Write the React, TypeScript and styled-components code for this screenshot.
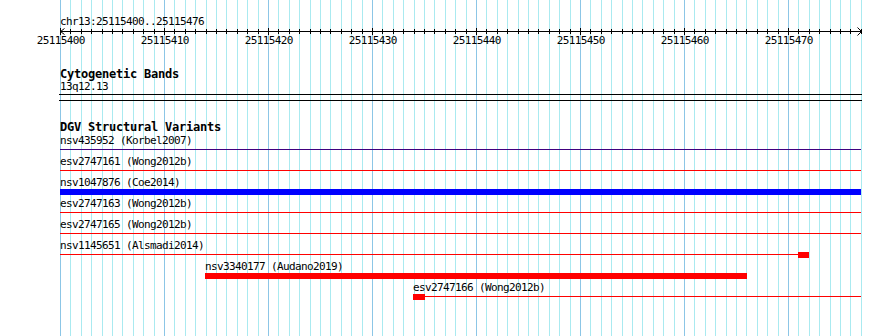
import React from "react";
import styled, { createGlobalStyle } from "styled-components";

const START = 25115400;
const SPAN = 77;
const LEFT = 60;
const SCALE = 10.4;
const WIDTH = 890;
const HEIGHT = 336;

// grid and ruler snap to the nearest pixel, features start on the pixel they fall in
const xOf = (offset: number) => Math.round(LEFT + offset * SCALE);
const featX = (offset: number) => Math.floor(LEFT + offset * SCALE);

type Segment = { from: number; to: number; thick?: boolean };
type Variant = { name: string; study: string; color: string; parts: Segment[] };

const variants: Variant[] = [
  { name: "nsv435952", study: "Korbel2007", color: "#40007f", parts: [{ from: 0, to: SPAN }] },
  { name: "esv2747161", study: "Wong2012b", color: "#ff0000", parts: [{ from: 0, to: SPAN }] },
  { name: "nsv1047876", study: "Coe2014", color: "#0000ff", parts: [{ from: 0, to: SPAN, thick: true }] },
  { name: "esv2747163", study: "Wong2012b", color: "#ff0000", parts: [{ from: 0, to: SPAN }] },
  { name: "esv2747165", study: "Wong2012b", color: "#ff0000", parts: [{ from: 0, to: SPAN }] },
  {
    name: "nsv1145651",
    study: "Alsmadi2014",
    color: "#ff0000",
    parts: [
      { from: 0, to: 71 },
      { from: 71, to: 72, thick: true },
    ],
  },
  { name: "nsv3340177", study: "Audano2019", color: "#ff0000", parts: [{ from: 14, to: 66, thick: true }] },
  {
    name: "esv2747166",
    study: "Wong2012b",
    color: "#ff0000",
    parts: [
      { from: 34, to: 35, thick: true },
      { from: 35, to: SPAN },
    ],
  },
];

const GlobalStyle = createGlobalStyle`
  html, body {
    margin: 0;
    padding: 0;
    background: #ffffff;
  }
`;

const Panel = styled.div`
  position: relative;
  width: ${WIDTH}px;
  height: ${HEIGHT}px;
  overflow: hidden;
  background: #ffffff;
  font-family: "DejaVu Sans Mono", "Liberation Mono", monospace;
  color: #000000;
`;

const GridLayer = styled.svg`
  position: absolute;
  left: 0;
  top: 0;
  z-index: 0;
`;

const Content = styled.div`
  position: relative;
  z-index: 1;
`;

const RulerSvg = styled.svg`
  display: block;
`;

const Track = styled.section<{ $gap: number }>`
  margin-top: ${(p) => p.$gap}px;
`;

const TrackTitle = styled.div`
  padding-left: ${LEFT}px;
  height: 12px;
  line-height: 12px;
  font-size: 12px;
  font-weight: bold;
  letter-spacing: -0.22px;
  white-space: pre;
`;

const BandLabel = styled.div`
  padding-left: ${LEFT}px;
  height: 13px;
  line-height: 13px;
  font-size: 11px;
  letter-spacing: -0.62px;
`;

const Band = styled.div`
  margin: 1px 0 0 ${LEFT - 1}px;
  width: ${xOf(SPAN) - LEFT + 2}px;
  height: 5px;
  border-top: 1px solid #000000;
  border-bottom: 1px solid #000000;
`;

const Rows = styled.div`
  margin-top: 2px;
`;

const Row = styled.div`
  height: 21px;
`;

const FeatureLabel = styled.div`
  height: 12px;
  line-height: 12px;
  font-size: 11px;
  letter-spacing: -0.62px;
  white-space: pre;
`;

const Lane = styled.div`
  position: relative;
  height: 9px;
`;

const Glyph = styled.div<{ $thick?: boolean; $color: string }>`
  position: absolute;
  top: ${(p) => (p.$thick ? 0 : 2)}px;
  height: ${(p) => (p.$thick ? 6 : 1)}px;
  background: ${(p) => p.$color};
`;

const Grid = () => {
  const lines = [];
  for (let i = 0; i <= SPAN; i++) {
    const x = xOf(i) + 0.5;
    lines.push(
      <line
        key={i}
        x1={x}
        x2={x}
        y1={0}
        y2={HEIGHT}
        stroke={i % 10 === 0 ? "#8cc6e6" : "#aaeaf0"}
        strokeWidth={1}
      />
    );
  }
  return (
    <GridLayer width={WIDTH} height={HEIGHT}>
      {lines}
    </GridLayer>
  );
};

const Ruler = () => {
  const y = 31.5;
  const right = xOf(SPAN) + 0.5;
  const ticks = [];
  const labels = [];
  for (let i = 0; i <= SPAN; i++) {
    const x = xOf(i) + 0.5;
    const major = i % 10 === 0;
    ticks.push(<line key={i} x1={x} x2={x} y1={major ? 28 : 29} y2={major ? 35 : 34} stroke="#000" />);
    if (major) {
      labels.push(
        <text key={i} x={x + 0.3} y={44} textAnchor="middle">
          {START + i}
        </text>
      );
    }
  }
  return (
    <RulerSvg width={WIDTH} height={52} fontFamily="DejaVu Sans Mono, Liberation Mono, monospace" fontSize={11} letterSpacing={-0.62}>
      <text x={LEFT} y={25}>
        chr13:{START}..{START + SPAN - 1}
      </text>
      <line x1={LEFT} x2={right} y1={y} y2={y} stroke="#000" />
      {ticks}
      <polyline points={`${LEFT + 4.5},${y - 3} ${LEFT + 0.5},${y} ${LEFT + 4.5},${y + 3}`} fill="none" stroke="#000" />
      <polyline points={`${right - 4},${y - 4} ${right},${y} ${right - 4},${y + 4}`} fill="none" stroke="#000" />
      {labels}
    </RulerSvg>
  );
};

const VariantRow = ({ v }: { v: Variant }) => {
  const start = Math.min(...v.parts.map((p) => p.from));
  return (
    <Row>
      <FeatureLabel style={{ paddingLeft: featX(start) }}>
        {v.name} ({v.study})
      </FeatureLabel>
      <Lane>
        {v.parts.map((p, i) => (
          <Glyph
            key={i}
            $thick={p.thick}
            $color={v.color}
            style={{ left: featX(p.from), width: featX(p.to) - featX(p.from) + 1 }}
          />
        ))}
      </Lane>
    </Row>
  );
};

export default function App() {
  return (
    <>
      <GlobalStyle />
      <Panel>
        <Grid />
        <Content>
          <Ruler />
          <Track $gap={16}>
            <TrackTitle>Cytogenetic Bands</TrackTitle>
            <BandLabel>13q12.13</BandLabel>
            <Band />
          </Track>
          <Track $gap={20}>
            <TrackTitle>DGV Structural Variants</TrackTitle>
            <Rows>
              {variants.map((v) => (
                <VariantRow key={v.name} v={v} />
              ))}
            </Rows>
          </Track>
        </Content>
      </Panel>
    </>
  );
}
